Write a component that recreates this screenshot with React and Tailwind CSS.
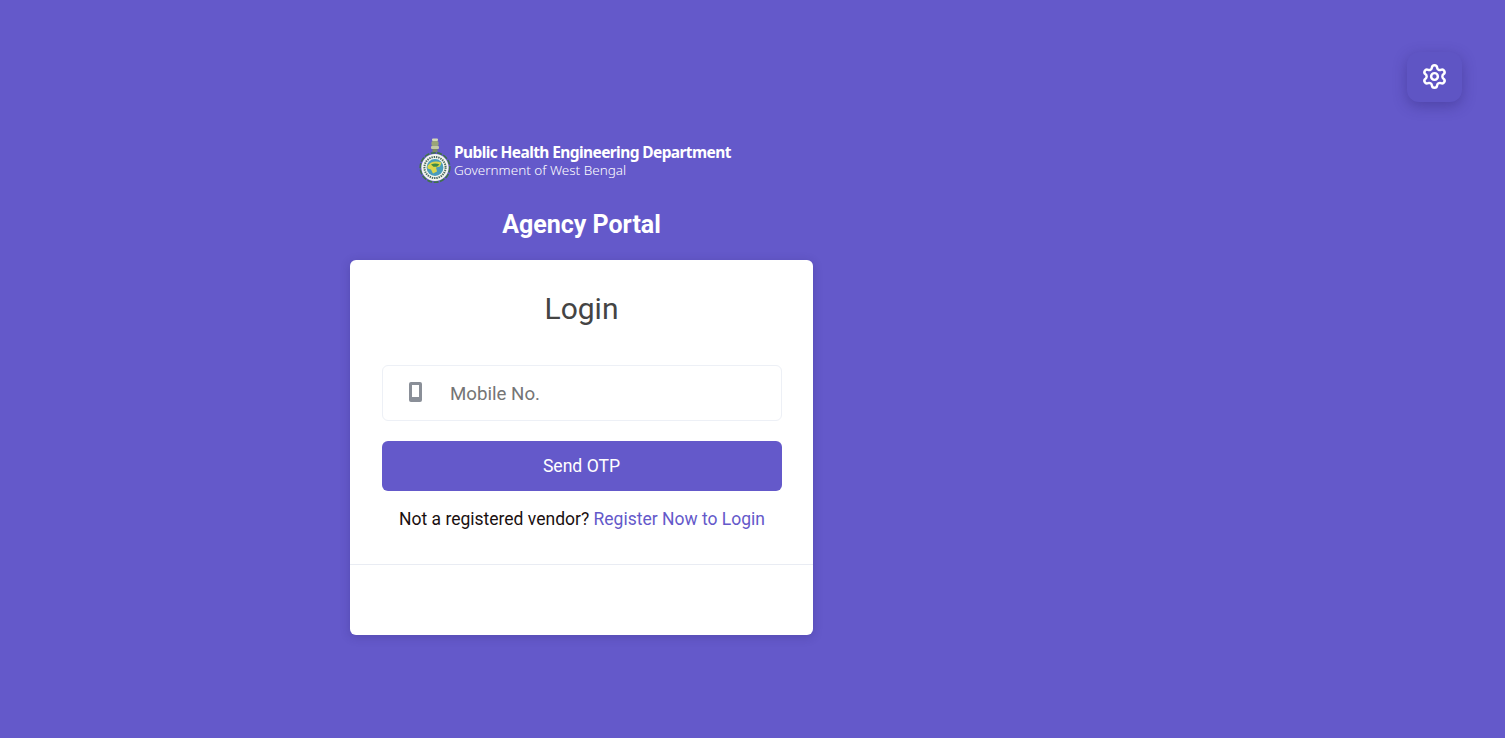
import { Settings } from 'lucide-react';

function Emblem() {
  return (
    <svg width="32" height="46" viewBox="0 0 32 46" className="shrink-0">
      {/* lion capital */}
      <rect x="13" y="0.5" width="6" height="2.5" rx="1" fill="#d5dab8" />
      <rect x="12.5" y="3" width="7" height="5" rx="1.5" fill="#9aa578" />
      <rect x="12" y="8" width="8" height="3" rx="1" fill="#c3c9a6" />
      <rect x="13.5" y="11" width="5" height="3" fill="#7c8a62" />
      {/* scalloped ring */}
      <circle cx="16" cy="29.5" r="14.8" fill="none" stroke="#3f7347" strokeWidth="1.6" strokeDasharray="5 1.5" />
      <circle cx="16" cy="29.5" r="13.6" fill="#f4f6ee" />
      <circle cx="16" cy="29.5" r="10.6" fill="none" stroke="#4d6a62" strokeWidth="2" strokeDasharray="1.4 0.9" />
      <circle cx="16" cy="29.5" r="8.4" fill="#4a9cbc" />
      <path d="M8.5 28c3-4.5 8-5.5 14-3.5l-1.5 4-4 1 1 4-4 2-2-4-3.500-1z" fill="#dcd64a" />
      <path d="M12 26.500c2.500-1.300 6-1.300 8.500 0l-2.500 2.300-3.500 0z" fill="#3d8b45" />
    </svg>
  );
}

export default function App() {
  return (
    <div className="min-h-screen bg-[#6459ca] relative font-['Roboto',sans-serif]">
      {/* Settings */}
      <button className="absolute top-[52px] left-[1407px] w-[55px] h-[50px] rounded-xl bg-[#5f55c4] shadow-[0_4px_14px_rgba(45,35,115,0.4)] flex items-center justify-center text-white">
        <Settings size={27} strokeWidth={2.2} className="mt-[-1px]" />
      </button>

      <div className="ml-[350px] w-[463px] pt-[138px] flex flex-col">
        {/* Logo */}
        <div className="h-[46px] pl-[69px] flex items-center gap-[3px]">
          <Emblem />
          <div className="text-white font-['Noto_Sans',sans-serif]">
            <div className="text-[15.5px] leading-[19px] font-bold tracking-[-0.6px] whitespace-nowrap">Public Health Engineering Department</div>
            <div className="text-[13.5px] leading-[17px] font-light whitespace-nowrap">Government of West Bengal</div>
          </div>
        </div>

        <h1 className="mt-[25px] h-[32px] text-center text-white text-[25px] leading-[32px] font-bold">Agency Portal</h1>

        {/* Card */}
        <div className="mt-[19px] h-[375px] bg-white rounded-md shadow-[0_2px_10px_rgba(40,30,100,0.25)] flex flex-col">
          <div className="h-[305px] pl-[32px] pr-[31px] border-b border-[#e9ecf3] flex flex-col">
            <h2 className="mt-[29px] pr-[1px] text-center text-[30px] leading-[40px] text-[#444]">Login</h2>

            <div className="mt-[36px] h-[56px] border border-[#edf0f6] rounded-md flex items-center">
              <svg width="13" height="20" viewBox="0 0 13 20" className="ml-[26px] mt-[-2px] text-[#8a8f98]">
                <path fillRule="evenodd" fill="currentColor" d="M2 0h9a2 2 0 0 1 2 2v16a2 2 0 0 1-2 2H2a2 2 0 0 1-2-2V2a2 2 0 0 1 2-2zM3 3v12h7V3z" />
              </svg>
              <input
                placeholder="Mobile No."
                className="ml-[28px] mt-[3px] flex-1 outline-none text-[18.7px] text-[#333] placeholder:text-[#757575]"
              />
            </div>

            <button className="mt-[20px] h-[50px] w-full rounded-md bg-[#6459ca] text-white text-[17.6px] pr-[1px]">Send OTP</button>

            <p className="mt-[15px] text-center text-[17.5px] leading-[27px] text-[#1a1010]">
              Not a registered vendor? <a href="#" className="text-[#6459ca]">Register Now to Login</a>
            </p>
          </div>
        </div>
      </div>
    </div>
  );
}
